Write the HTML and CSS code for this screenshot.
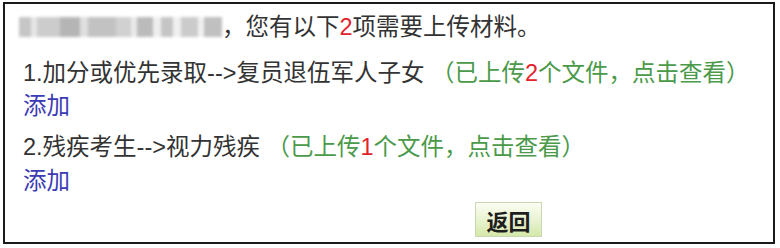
FILE: index.html
```html
<!DOCTYPE html>
<html lang="zh-CN">
<head>
    <meta charset="UTF-8">
    <meta name="viewport" content="width=device-width, initial-scale=1.0">
    <title>上传材料</title>
    <link rel="stylesheet" href="styles.css">
</head>
<body>
    <div class="panel">
        <p class="line first">
            <span class="masked"></span>，您有以下<span class="num">2</span>项需要上传材料。
        </p>
        <p class="line item">1.加分或优先录取--&gt;复员退伍军人子女 <span class="status">（已上传<span class="num">2</span>个文件，点击查看）</span></p>
        <p class="line add"><a href="#">添加</a></p>
        <p class="line item second">2.残疾考生--&gt;视力残疾 <span class="status">（已上传<span class="num">1</span>个文件，点击查看）</span></p>
        <p class="line add last"><a href="#">添加</a></p>
        <div class="actions">
            <button type="button">返回</button>
        </div>
    </div>
</body>
</html>
```

FILE: styles.css
```css
body {
    margin: 0;
    font-family: "Liberation Sans", "Noto Sans CJK SC", sans-serif;
    color: #333;
    background: #fff;
}
.panel {
    margin: 2px 5px 0 3px;
    height: 242px;
    box-sizing: border-box;
    border: 2px solid #1a1a1a;
    padding: 7px 0 0 18px;
}
.line {
    margin: 0;
    font-size: 23.5px;
    line-height: 32px;
    white-space: nowrap;
}
.item {
    margin-top: 14px;
}
.item.second {
    margin-top: 9px;
}
.add {
    margin-top: 1px;
}
.add.last {
    margin-top: 2px;
}
.add a {
    color: #3b3bb5;
    text-decoration: none;
}
.masked {
    display: inline-block;
    width: 203px;
    height: 20px;
    vertical-align: -2px;
    margin-left: -4px;
    background:
        linear-gradient(90deg,
            #bdbdbd 0 6%, #e2e2e2 6% 9%, #c4c4c4 9% 20%, #a9a9a9 20% 30%,
            #dadada 30% 34%, #b8b8b8 34% 48%, #c9c9c9 48% 55%, #e6e6e6 55% 58%,
            #b0b0b0 58% 66%, #ececec 66% 70%, #bcbcbc 70% 76%, #eeeeee 76% 80%,
            #c2c2c2 80% 88%, #efefef 88% 91%, #b6b6b6 91% 100%);
    filter: blur(1.5px);
    opacity: 0.85;
}
.status {
    color: #4a9a4a;
}
.num {
    color: #e3232b;
}
.actions {
    margin-top: 5px;
    padding-left: 452px;
}
button {
    width: 67px;
    height: 35px;
    padding: 0;
    font-family: "Noto Sans CJK SC", sans-serif;
    font-size: 22px;
    font-weight: bold;
    color: #1e1e1e;
    border: 1px solid #c9d7b4;
    background: linear-gradient(#fbfdf3, #e6f1cb 60%, #d5e8a8);
    cursor: pointer;
}
```
